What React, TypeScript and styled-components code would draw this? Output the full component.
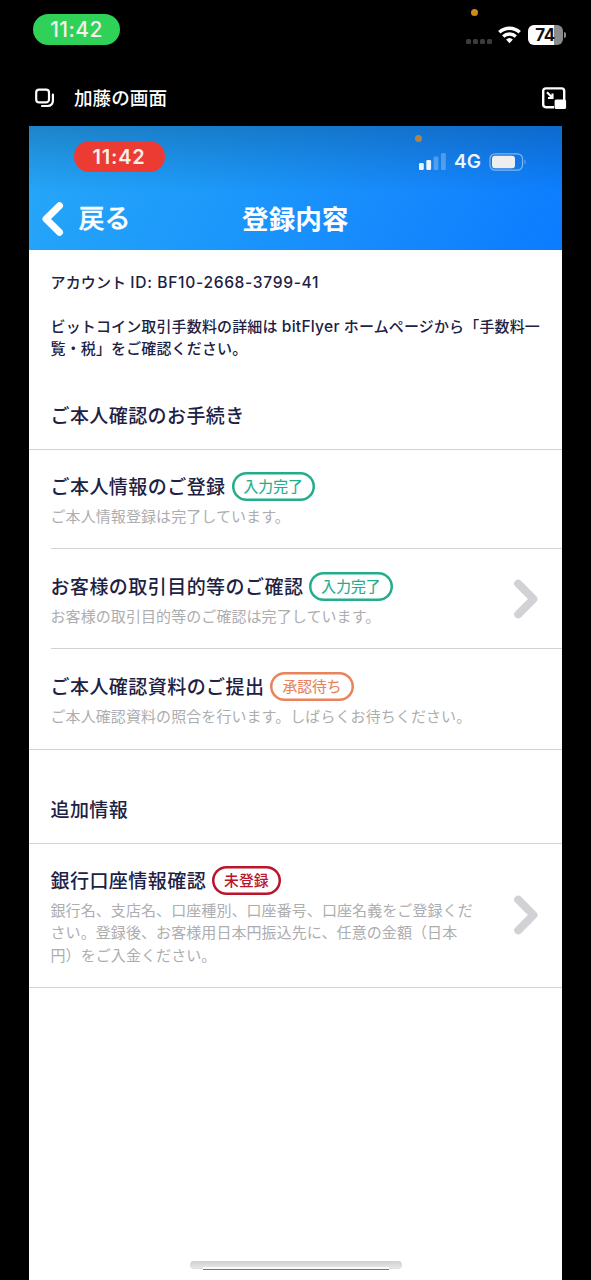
import React from "react";
import styled, { createGlobalStyle } from "styled-components";

const GlobalStyle = createGlobalStyle`
  * { box-sizing: border-box; }
  body { margin: 0; background: #000; font-family: Inter, "Noto Sans CJK JP", sans-serif; }
  svg { display: block; flex: none; }
`;

const Device = styled.div`
  width: 591px;
  height: 1280px;
  overflow: hidden;
  background: #000;
  display: flex;
  flex-direction: column;
`;

const StatusBar = styled.div`
  position: relative;
  height: 70px;
  padding: 14px 25px 0 33px;
  display: flex;
  justify-content: space-between;
  align-items: flex-start;
`;

const TimePill = styled.div<{ $color: string; $bold?: boolean; $w: number }>`
  width: ${(p) => p.$w}px;
  height: 31px;
  border-radius: 16px;
  background: ${(p) => p.$color};
  color: #f4f0ec;
  font-size: ${(p) => (p.$bold ? 20 : 21)}px;
  font-weight: ${(p) => (p.$bold ? 600 : 500)};
  letter-spacing: ${(p) => (p.$bold ? 0.8 : 0.4)}px;
  line-height: 32px;
  text-align: center;
`;

const OuterIcons = styled.div`
  display: flex;
  align-items: center;
  gap: 7px;
  margin-top: 10px;
  height: 22px;
`;

const CellDots = styled.div`
  display: flex;
  gap: 2px;
  padding-top: 12px;
  margin-right: -1px;
  i {
    width: 5px;
    height: 5px;
    border-radius: 1.5px;
    background: #3c3c3c;
  }
`;

const OuterBattery = styled.div`
  display: flex;
  align-items: center;
  gap: 1px;
`;

const BatteryBody = styled.div`
  width: 35px;
  height: 20px;
  border-radius: 6px;
  background: linear-gradient(90deg, #fff 26px, #8c8c8c 26px);
  color: #111;
  font-size: 17px;
  font-weight: 700;
  line-height: 20px;
  text-align: center;
  padding-right: 1px;
  letter-spacing: -0.4px;
`;

const BatteryTip = styled.span`
  width: 2px;
  height: 6px;
  border-radius: 0 2px 2px 0;
  background: #8c8c8c;
`;

const RecordingDot = styled.span<{ $x: number; $y: number; $color: string }>`
  position: absolute;
  left: ${(p) => p.$x}px;
  top: ${(p) => p.$y}px;
  width: 7px;
  height: 7px;
  border-radius: 50%;
  background: ${(p) => p.$color};
`;

const ShareBar = styled.div`
  height: 56px;
  padding: 0 24px 0 34px;
  display: flex;
  align-items: center;
`;

const ShareTitle = styled.div`
  flex: 1;
  margin-left: 19px;
  color: #fff;
  font-size: 18.6px;
  font-weight: 500;
  line-height: 28px;
`;

const Screen = styled.main`
  position: relative;
  width: 533.5px;
  flex: 1;
  margin-left: 28.5px;
  background: #fff;
  color: #1d2144;
`;

const Header = styled.header`
  position: relative;
  height: 124px;
  background: linear-gradient(180deg, rgba(8, 50, 90, 0.3) 0, rgba(8, 50, 90, 0.14) 34px, rgba(8, 50, 90, 0) 66px),
    linear-gradient(120deg, #27a8f9 0%, #1b97fb 42%, #1688fd 72%, #0a7cff 100%);
`;

const InnerStatus = styled.div`
  height: 62px;
  padding: 15px 35px 0 45px;
  display: flex;
  align-items: flex-start;
  justify-content: space-between;
`;

const InnerIcons = styled.div`
  display: flex;
  align-items: center;
  height: 20px;
  margin-top: 10.5px;
  color: #edf4fb;
  font-size: 19px;
  font-weight: 600;
  line-height: 20px;
`;

const Network = styled.span`
  width: 28px;
  margin: 1px 7px 0 8px;
`;

const NavBar = styled.div`
  height: 62px;
  display: grid;
  grid-template-columns: 150px 1fr 150px;
  align-items: center;
  color: #fff;
  font-size: 26px;
  font-weight: 500;
  line-height: 60px;
`;

const BackButton = styled.div`
  display: flex;
  align-items: center;
  gap: 14px;
  padding-left: 12px;
  -webkit-text-stroke: 0.4px #fff;
`;

const NavTitle = styled.h1`
  margin: 0;
  text-align: center;
  font-size: 26.6px;
  font-weight: 700;
  line-height: 60px;
`;

const Intro = styled.section`
  padding: 22px 0 0 22px;
  font-size: 15px;
  font-weight: 500;
  line-height: 22px;
  white-space: nowrap;
`;

const Paragraph = styled.p`
  margin: 0 0 22px;
  letter-spacing: 0.14px;
`;

const Latin = styled.span<{ $spacing: number }>`
  font-size: 15.6px;
  letter-spacing: ${(p) => p.$spacing}px;
`;

const SectionTitle = styled.h2<{ $top: number; $height: number }>`
  margin: 0;
  height: ${(p) => p.$height}px;
  padding: ${(p) => p.$top}px 0 0 22px;
  border-bottom: 1px solid #d2d2d4;
  font-size: 19px;
  font-weight: 500;
  letter-spacing: 0.42px;
  line-height: 28px;
`;

const Row = styled.div<{ $height: number; $top: number; $inset?: boolean }>`
  height: ${(p) => p.$height}px;
  margin-left: ${(p) => (p.$inset ? 22 : 0)}px;
  padding: ${(p) => p.$top}px 23.5px 0 ${(p) => (p.$inset ? 0 : 22)}px;
  border-bottom: 1px solid #d2d2d4;
  display: flex;
  justify-content: space-between;
  white-space: nowrap;
`;

const RowHead = styled.div`
  display: flex;
  gap: 6px;
  height: 29px;
  font-size: 19px;
  font-weight: 500;
  letter-spacing: 0.45px;
  line-height: 31px;
`;

const Badge = styled.span<{ $color: string; $strong?: boolean }>`
  height: 29px;
  padding: 0 12px;
  box-shadow: inset 0 0 0 2.5px ${(p) => p.$color};
  border-radius: 15px;
  color: ${(p) => p.$color};
  font-size: 14.8px;
  font-weight: ${(p) => (p.$strong ? 500 : 400)};
  -webkit-text-stroke: ${(p) => (p.$strong ? 0 : 0.15)}px ${(p) => p.$color};
  letter-spacing: 0;
  line-height: 31px;
`;

const Description = styled.p`
  margin: 5px 0 0;
  color: #adadb0;
  font-size: 15px;
  letter-spacing: 0.08px;
  line-height: 22.4px;
`;

const ChevronSlot = styled.div<{ $top: number }>`
  margin-top: ${(p) => p.$top}px;
`;

const HomeIndicator = styled.div`
  position: absolute;
  left: 161px;
  bottom: 11px;
  width: 212px;
  height: 8px;
  border-radius: 4px;
  background: linear-gradient(180deg, #cfcfcf, #e2e2e2 70%);
  &::after {
    content: "";
    position: absolute;
    left: 13px;
    top: 6px;
    width: 186px;
    height: 2px;
    border-bottom: 1px solid #777;
    background: #fafafa;
  }
`;

const Chevron = () => (
  <svg width="26" height="42" viewBox="0 0 26 42" fill="none" stroke="#d1d1d6" strokeWidth="8" strokeLinecap="round" strokeLinejoin="round">
    <path d="M5.2 5.7 20.5 21 5.2 36.3" />
  </svg>
);

const GREEN = "#24ad8c";
const ORANGE = "#e8835c";
const RED = "#b9142a";

type ItemProps = {
  title: string;
  badge: string;
  color: string;
  lines: string[];
  height: number;
  top: number;
  inset?: boolean;
  chevronTop?: number;
};

const Item = ({ title, badge, color, lines, height, top, inset, chevronTop }: ItemProps) => (
  <Row $height={height} $top={top} $inset={inset}>
    <div>
      <RowHead>
        {title}
        <Badge $color={color} $strong={color === RED}>{badge}</Badge>
      </RowHead>
      <Description>
        {lines.map((l) => (
          <React.Fragment key={l}>
            {l}
            <br />
          </React.Fragment>
        ))}
      </Description>
    </div>
    {chevronTop !== undefined && (
      <ChevronSlot $top={chevronTop}>
        <Chevron />
      </ChevronSlot>
    )}
  </Row>
);

export default function App() {
  return (
    <Device>
      <GlobalStyle />
      <StatusBar>
        <TimePill $color="#30d158" $w={87}>11:42</TimePill>
        <OuterIcons>
          <CellDots>
            <i />
            <i />
            <i />
            <i />
          </CellDots>
          <svg width="23" height="18" viewBox="0 0 23 18" fill="none" stroke="#fff" strokeWidth="3.4">
            <path d="M1.3 6.3C7 .8 16 .8 21.7 6.3" />
            <path d="M5.2 10.6C8.8 7.2 14.2 7.2 17.8 10.6" />
            <path d="M8.1 13.6a5 5 0 0 1 6.8 0L11.5 17.2z" fill="#fff" stroke="none" />
          </svg>
          <OuterBattery>
            <BatteryBody>74</BatteryBody>
            <BatteryTip />
          </OuterBattery>
        </OuterIcons>
        <RecordingDot $x={471} $y={9} $color="#cf8a20" />
      </StatusBar>
      <ShareBar>
        <svg width="21" height="20" viewBox="0 0 21 20" fill="none" stroke="#fff" strokeWidth="2.2" strokeLinecap="round">
          <rect x="2.2" y="1.6" width="12.8" height="12.8" rx="3" />
          <path d="M18.9 6.5V12.5Q18.9 18 13.4 18H8" />
        </svg>
        <ShareTitle>加藤の画面</ShareTitle>
        <svg width="25" height="23" viewBox="0 0 25 23" fill="none" stroke="#fff">
          <path d="M12 20.2H4Q1.2 20.2 1.2 17.6V4Q1.2 1.4 4 1.4H19.6Q22.2 1.4 22.2 4V13" strokeWidth="2.4" />
          <path d="M5 5.3 10.1 10.4M6 11H10.5V6.5" strokeWidth="2.1" />
          <rect x="12.6" y="12.4" width="11.5" height="9.6" rx="1.6" fill="#fff" stroke="none" />
        </svg>
      </ShareBar>
      <Screen>
        <Header>
          <InnerStatus>
            <TimePill $color="#ec3b32" $bold $w={91}>11:42</TimePill>
            <InnerIcons>
              <svg width="27" height="17" viewBox="0 0 27 17" fill="#edf4fb">
                <rect x="0" y="10" width="4.8" height="7" rx="1.3" />
                <rect x="7.3" y="7" width="4.8" height="10" rx="1.3" />
                <rect x="14.6" y="3.5" width="4.8" height="13.5" rx="1.3" opacity=".28" />
                <rect x="22" y="0" width="4.8" height="17" rx="1.3" opacity=".28" />
              </svg>
              <Network>4G</Network>
              <svg width="38" height="18" viewBox="0 0 38 18">
                <rect x="1" y=".8" width="32.5" height="16.4" rx="5" fill="none" stroke="#a9c9ef" strokeWidth="1.2" opacity=".75" />
                <rect x="3" y="2.8" width="23" height="12.4" rx="3" fill="#eeedef" />
                <path d="M35.5 6.5q2 2.5 0 5z" fill="#a9c9ef" opacity=".75" />
              </svg>
            </InnerIcons>
          </InnerStatus>
          <NavBar>
            <BackButton>
              <svg width="24" height="36" viewBox="0 0 24 36" fill="none" stroke="#fff" strokeWidth="7" strokeLinecap="round" strokeLinejoin="round">
                <path d="M18.5 4.7 5 18 18.5 31.3" />
              </svg>
              戻る
            </BackButton>
            <NavTitle>登録内容</NavTitle>
          </NavBar>
          <RecordingDot $x={386.5} $y={9} $color="#ad8549" />
        </Header>
        <Intro>
          <Paragraph>
            アカウント <Latin $spacing={0.66}>ID: BF10-2668-3799-41</Latin>
          </Paragraph>
          <Paragraph>
            ビットコイン取引手数料の詳細は <Latin $spacing={0.25}>bitFlyer</Latin> ホームページから「手数料一
            <br />
            覧・税」をご確認ください。
          </Paragraph>
        </Intro>
        <SectionTitle $top={21} $height={68}>ご本人確認のお手続き</SectionTitle>
        <Item title="ご本人情報のご登録" badge="入力完了" color={GREEN} lines={["ご本人情報登録は完了しています。"]} height={99} top={22} inset />
        <Item
          title="お客様の取引目的等のご確認"
          badge="入力完了"
          color={GREEN}
          lines={["お客様の取引目的等のご確認は完了しています。"]}
          height={100}
          top={23}
          inset
          chevronTop={6}
        />
        <Item
          title="ご本人確認資料のご提出"
          badge="承認待ち"
          color={ORANGE}
          lines={["ご本人確認資料の照合を行います。しばらくお待ちください。"]}
          height={101}
          top={23.4}
        />
        <SectionTitle $top={46.5} $height={94}>追加情報</SectionTitle>
        <Item
          title="銀行口座情報確認"
          badge="未登録"
          color={RED}
          lines={[
            "銀行名、支店名、口座種別、口座番号、口座名義をご登録くだ",
            "さい。登録後、お客様用日本円振込先に、任意の金額（日本",
            "円）をご入金ください。",
          ]}
          height={144}
          top={22}
          chevronTop={28}
        />
        <HomeIndicator />
      </Screen>
    </Device>
  );
}
